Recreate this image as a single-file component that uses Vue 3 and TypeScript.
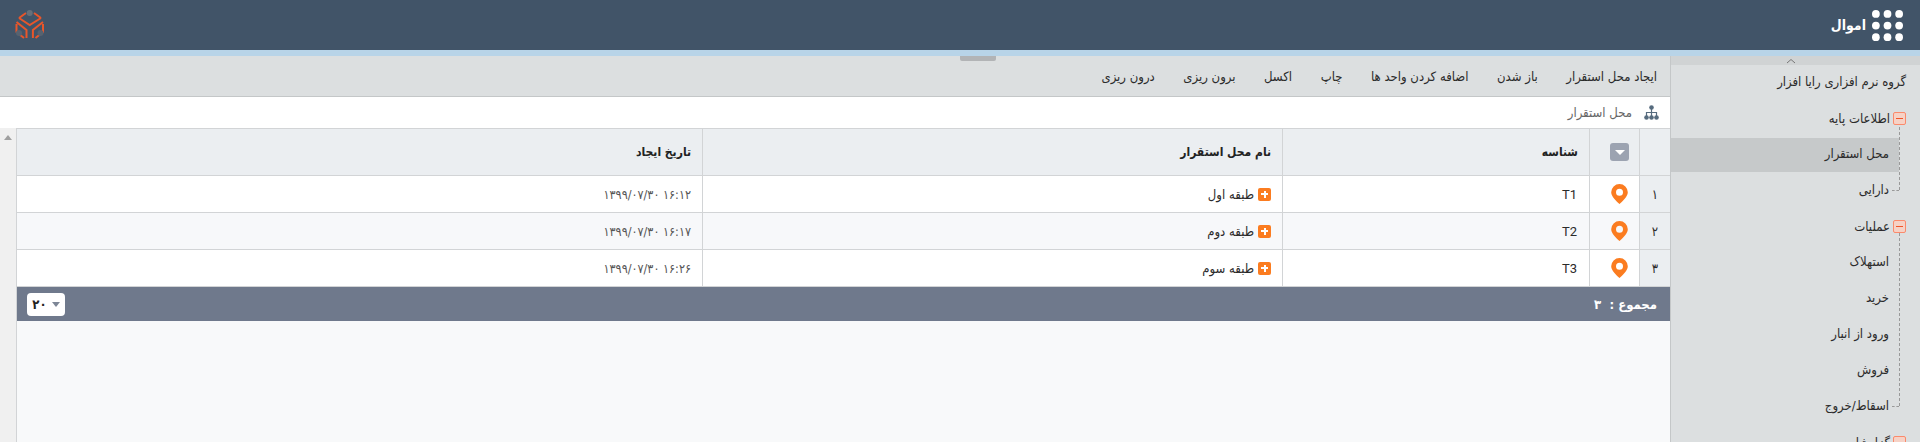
<script setup lang="ts">
const actions = ['ایجاد محل استقرار', 'باز شدن', 'اضافه کردن واحد ها', 'چاپ', 'اکسل', 'برون ریزی', 'درون ریزی']

const rows = [
  { num: '۱', code: 'T1', name: 'طبقه اول', date: '۱۶:۱۲ ۱۳۹۹/۰۷/۳۰' },
  { num: '۲', code: 'T2', name: 'طبقه دوم', date: '۱۶:۱۷ ۱۳۹۹/۰۷/۳۰' },
  { num: '۳', code: 'T3', name: 'طبقه سوم', date: '۱۶:۲۶ ۱۳۹۹/۰۷/۳۰' },
]

const groups = [
  { title: 'اطلاعات پایه', items: ['محل استقرار', 'دارایی'] },
  { title: 'عملیات', items: ['استهلاک', 'خرید', 'ورود از انبار', 'فروش', 'اسقاط/خروج'] },
  { title: 'گزارشات', items: [] as string[] },
]
</script>

<template>
  <div class="page" dir="rtl">
    <header class="topbar">
      <div class="brand">
        <svg class="apps" viewBox="0 0 32 32">
          <template v-for="y in [4, 16, 28]" :key="y">
            <circle v-for="x in [4, 16, 28]" :key="x" :cx="x" :cy="y" r="4" fill="#fff" />
          </template>
        </svg>
        <span class="brand-name">اموال</span>
      </div>
      <svg class="logo" viewBox="0 0 30 30" fill="none">
        <path d="M4 8 14.700 15 26 8M4 8 11 3M19 3 26 8M1.500 12 11.500 20V28M1.500 14V22L9 28M28 12 17.900 20V28M28 14V22L20.500 28" stroke="#e8562a" stroke-width="2" />
        <circle cx="14.700" cy="3" r="3" fill="#66707a" />
        <circle cx="4" cy="23" r="3" fill="#566270" />
        <circle cx="25.500" cy="23" r="3" fill="#566270" />
      </svg>
    </header>
    <div class="strip"></div>

    <div class="body">
      <aside class="sidebar">
        <div class="side-head">
          <svg width="10" height="6" viewBox="0 0 10 6" fill="none"><path d="M1 5 5 1.500 9 5" stroke="#777" /></svg>
        </div>
        <div class="org">گروه نرم افزاری رایا افزار</div>
        <div v-for="group in groups" :key="group.title" class="group">
          <div class="group-title">
            <span class="minus"></span>
            <span>{{ group.title }}</span>
          </div>
          <ul v-if="group.items.length" class="items">
            <li v-for="item in group.items" :key="item" :class="['item', { active: item === 'محل استقرار' }]">{{ item }}</li>
          </ul>
        </div>
      </aside>

      <main class="main">
        <div class="toolbar">
          <span v-for="a in actions" :key="a" class="action">{{ a }}</span>
          <span class="handle"></span>
        </div>
        <div class="title-row">
          <svg class="tree" viewBox="0 0 15 15" fill="none">
            <path d="M2.500 11V7.500H12.500V11M7.500 4V11" stroke="#566b7e" stroke-width="1.200" />
            <circle cx="7.500" cy="2.500" r="2.300" fill="#566b7e" />
            <circle cx="2.500" cy="12.500" r="2.300" fill="#566b7e" />
            <circle cx="7.500" cy="12.500" r="2.300" fill="#566b7e" />
            <circle cx="12.500" cy="12.500" r="2.300" fill="#566b7e" />
          </svg>
          <span>محل استقرار</span>
        </div>
        <div class="content">
          <div class="grid-wrap">
            <div class="grid">
              <div class="cell head num"></div>
              <div class="cell head icon"><span class="dd"></span></div>
              <div class="cell head">شناسه</div>
              <div class="cell head">نام محل استقرار</div>
              <div class="cell head last">تاریخ ایجاد</div>
              <template v-for="(r, i) in rows" :key="r.code">
                <div class="cell num">{{ r.num }}</div>
                <div :class="['cell', 'icon', { odd: i === 1 }]">
                  <svg width="17" height="20" viewBox="0 0 17 20"><path fill-rule="evenodd" d="M8.500 0a8.300 8.300 0 0 1 8.300 8.300c0 4.400-5.400 9.200-8.300 11.700C5.600 17.500.2 12.700.2 8.300A8.300 8.300 0 0 1 8.500 0Zm0 4.800a3.500 3.500 0 1 0 0 7 3.500 3.500 0 0 0 0-7Z" fill="#fb7c20" /></svg>
                </div>
                <div :class="['cell', 'code', { odd: i === 1 }]">{{ r.code }}</div>
                <div :class="['cell', { odd: i === 1 }]">
                  <span class="plus"></span>{{ r.name }}
                </div>
                <div :class="['cell', 'last', 'date', { odd: i === 1 }]">{{ r.date }}</div>
              </template>
            </div>
            <div class="foot">
              <span class="total">مجموع :&nbsp;&nbsp;۳</span>
              <span class="pager">۲۰<i></i></span>
            </div>
          </div>
          <div class="vscroll"><i></i></div>
        </div>
      </main>
    </div>
  </div>
</template>

<style>
html, body { margin: 0; height: 100%; overflow: hidden; }
</style>

<style scoped>
.page { width: 1920px; height: 442px; overflow: hidden; font-family: "DejaVu Sans Condensed", "DejaVu Sans", sans-serif; font-size: 13px; color: #2b2b2b; background: #f8f9fa; }

.topbar { height: 50px; background: #415468; display: flex; align-items: center; justify-content: space-between; padding: 0 17px 0 15px; }
.brand { display: flex; align-items: center; gap: 6px; }
.apps { width: 31px; height: 31px; }
.brand-name { color: #fff; font-weight: 700; font-size: 14px; }
.logo { width: 30px; height: 30px; }
.strip { height: 6px; background: #b8d4e8; }

.body { display: flex; height: 386px; }

.sidebar { width: 249px; flex: none; background: #dcdfe0; border-left: 1px solid #c4c7c8; overflow: hidden; color: #2b2b2b; }
.side-head { height: 9px; background: #d0d3d4; display: flex; justify-content: center; align-items: center; padding-right: 10px; }
.org { height: 35px; line-height: 34px; padding-right: 14px; }
.group-title { height: 36px; display: flex; align-items: center; gap: 3px; padding-right: 14px; }
.minus { width: 11px; height: 11px; flex: none; border: 1px solid #fb8a6c; border-radius: 2px; background: #f6d2c6; position: relative; }
.minus::after { content: ""; position: absolute; left: 2px; right: 2px; top: 5px; height: 1px; background: #f0562a; }
.items { list-style: none; margin: 0; padding: 0; position: relative; }
.items::before { content: ""; position: absolute; right: 20px; top: -11px; bottom: 18px; border-right: 1px dashed #999; z-index: 1; }
.item { height: 36px; line-height: 36px; padding-right: 31px; position: relative; }
.item:last-child::after { content: ""; position: absolute; right: 21px; top: 18px; width: 7px; border-top: 1px dashed #999; }
.item.active { height: 34px; line-height: 32px; margin-top: 2px; background: #c6c9ca; margin-right: 21px; padding-right: 10px; }

.main { flex: 1; min-width: 0; display: flex; flex-direction: column; }
.toolbar { height: 40px; flex: none; background: #dcdfe0; border-bottom: 1px solid #c4c7c8; display: flex; align-items: center; gap: 28.500px; padding: 0 13px; position: relative; }
.action { color: #2b2b2b; }
.handle { position: absolute; top: 0; left: 960px; width: 36px; height: 5px; background: #b2b4b6; border-radius: 0 0 2px 2px; }
.title-row { height: 31px; flex: none; background: #fff; display: flex; align-items: center; gap: 12px; padding-right: 11px; color: #666; }
.tree { width: 15px; height: 15px; }

.content { flex: 1; display: flex; min-height: 0; }
.grid-wrap { flex: 1; min-width: 0; }
.grid { display: grid; grid-template-columns: 31px 50px 307px 580px 1fr; grid-auto-rows: 37px; grid-template-rows: 47px; border-top: 1px solid #d2d4d6; }
.cell { display: flex; align-items: center; padding: 0 11px; background: #fff; border-left: 1px solid #d2d4d6; border-bottom: 1px solid #d2d4d6; box-sizing: border-box; color: #2b2b2b; }
.cell.odd { background: #f7f8fa; }
.cell.last { border-left: 0; }
.cell.head { background: #ebeef1; font-weight: 700; font-size: 12px; color: #222; }
.cell.num { background: #ebeef1; justify-content: center; padding: 0; }
.cell.icon { justify-content: center; padding: 0 0 0 10px; }
.cell.code { font-family: Roboto, "Liberation Sans", sans-serif; font-size: 13px; padding-right: 12px; }
.cell.date { font-size: 12.500px; color: #555; }
.dd { width: 19px; height: 18px; border-radius: 3px; background: #9ca3b1; display: flex; align-items: center; justify-content: center; }
.dd::after { content: ""; border: 5px solid transparent; border-top: 5px solid #fff; border-bottom: 0; }
.plus { width: 13px; height: 13px; border-radius: 2px; background: #fb7c20; margin-left: 4px; position: relative; flex: none; }
.plus::before { content: ""; position: absolute; left: 3px; right: 3px; top: 5.500px; height: 2px; background: #fff; }
.plus::after { content: ""; position: absolute; top: 3px; bottom: 3px; left: 5.500px; width: 2px; background: #fff; }

.foot { height: 34px; background: #6f798c; display: flex; align-items: center; justify-content: space-between; padding: 0 13px 0 10px; }
.total { color: #fff; font-weight: 700; font-size: 13px; }
.pager { width: 38px; height: 23px; box-sizing: border-box; background: #fff; border-radius: 4px; display: flex; align-items: center; justify-content: center; gap: 5px; font-weight: 700; color: #222; font-size: 13px; flex-direction: row-reverse; }
.pager i { border: 4px solid transparent; border-top: 5px solid #7d8696; border-bottom: 0; }

.vscroll { width: 17px; flex: none; background: #f0f0f0; border-right: 1px solid #d2d4d6; box-sizing: border-box; display: flex; justify-content: center; padding-top: 7px; }
.vscroll i { width: 0; height: 0; border: 4px solid transparent; border-bottom: 5px solid #a0a0a0; border-top: 0; }
</style>
